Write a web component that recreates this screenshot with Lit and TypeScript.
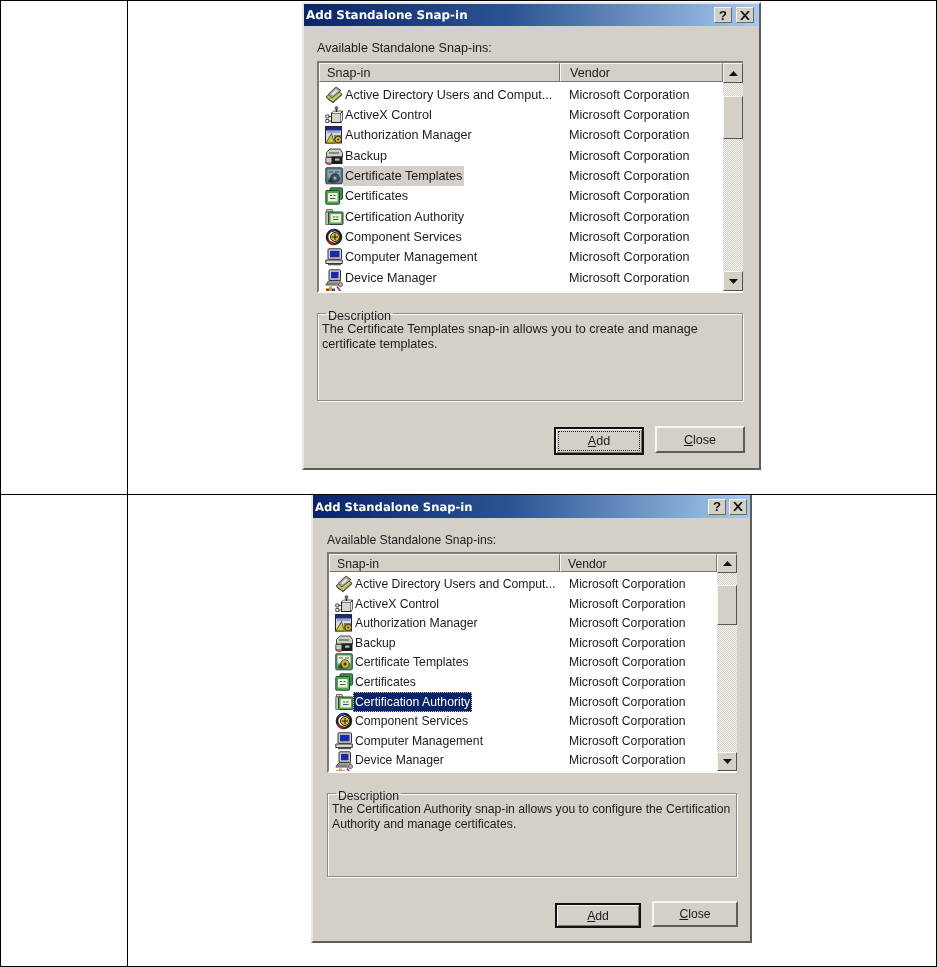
import { LitElement, html, css, svg } from "lit";
import { customElement, property } from "lit/decorators.js";

const icons: Record<string, unknown> = {
  ad: svg`<path d="M1 11 9.5 3 17 8 8 16.500z" fill="#c9c85a" stroke="#3a3a3a" stroke-width=".9"/><path d="M3 8.500 11 1l5 3.500-9 7.500z" fill="#a2a29a" stroke="#444" stroke-width=".9"/><path d="M6 8l5-4.500 2 1.500-5 4.500z" fill="#e6e6e0"/><path d="M2 12l6 4.500 9-8" fill="none" stroke="#555" stroke-width="1.100"/>`,
  ax: svg`<rect x="6.500" y="7" width="9.500" height="9.500" fill="#d8d6cc" stroke="#222" stroke-width="1"/><path d="M6.500 7l2-2h9l-1.500 2M16 7l1.500-2v9l-1.500 2.500" fill="#f2f1ec" stroke="#222" stroke-width=".7"/><path d="M11.500 6V2.500" stroke="#222" stroke-width="1.400"/><circle cx="11.500" cy="2" r="1.500" fill="#777" stroke="#222" stroke-width=".5"/><path d="M.8 9h3v3h-3zM.8 13.500h3v3h-3z" fill="#fff" stroke="#222" stroke-width=".8"/><path d="M3.800 10.500h2.700M3.800 15h2.700" stroke="#222" stroke-width=".8"/>`,
  az: svg`<rect x=".5" y=".5" width="16" height="16.500" fill="#d8d8e8" stroke="#223" stroke-width="1"/><rect x="1" y="1" width="15" height="3.500" fill="#1c2a80"/><rect x="2" y="5" width="13" height="2" fill="#9aa3d0"/><path d="M1 17 6.500 7.500 9.500 17z" fill="#d9c52a" stroke="#222" stroke-width=".7"/><path d="M9 9h7v8H9z" fill="#6d8f4a"/><circle cx="13.200" cy="13.500" r="3.300" fill="#e2b91e" stroke="#222" stroke-width=".9"/><circle cx="13.200" cy="13.500" r="1.100" fill="#222"/>`,
  bk: svg`<path d="M1.500 5.500 5 2h10l2.500 3.500V10h-16z" fill="#cfcfc8" stroke="#333" stroke-width=".9"/><path d="M4 6h10" stroke="#4d8a54" stroke-width="1.500"/><path d="M.8 10.500h10v5.500H.8z" fill="#c9c9c0" stroke="#333" stroke-width=".8"/><rect x="6.500" y="9.500" width="11" height="7.500" fill="#1d1d1d"/><rect x="10" y="11.500" width="4.500" height="2.200" fill="#bbb"/><path d="M.8 15.500c2 2.200 4 2.200 6 1" stroke="#b22" fill="none" stroke-width="1.200"/>`,
  ct1: svg`<rect x=".8" y=".8" width="16.500" height="16" rx="1" fill="#5b7b8b" stroke="#283c44" stroke-width="1"/><rect x="2.500" y="2.500" width="13" height="8" fill="#8aa5b2"/><path d="M4 5h4M10 5h4" stroke="#37505c" stroke-width="1"/><circle cx="10" cy="11" r="4.300" fill="#3f5054" stroke="#1f2a2e" stroke-width=".8"/><circle cx="10" cy="11" r="1.500" fill="#9fb4bc"/><path d="M2.500 15l3.500-5 2.500 6z" fill="#263338"/>`,
  ct2: svg`<rect x=".8" y=".8" width="16.500" height="16" rx="1" fill="#5da050" stroke="#244" stroke-width="1"/><rect x="2.500" y="2.500" width="13" height="8" fill="#e9f0d6"/><path d="M4 5h4M10 5h4" stroke="#567" stroke-width="1"/><circle cx="10" cy="11" r="4.300" fill="#c9b52c" stroke="#333" stroke-width=".8"/><circle cx="10" cy="11" r="1.500" fill="#333"/><path d="M2.500 15l3.500-5 2.500 6z" fill="#2d4f2c"/>`,
  ce: svg`<rect x="5" y=".8" width="12.500" height="11.500" rx="1" fill="#3e8a4f" stroke="#1f4a2c" stroke-width=".9"/><rect x=".8" y="3.500" width="13.700" height="13.700" rx="1" fill="#58a653" stroke="#1f4a2c" stroke-width="1"/><rect x="3" y="6" width="9.500" height="8.500" fill="#edf1d8"/><path d="M5 8.500h2M8.500 8.500h2M5 11.500h5.500" stroke="#456" stroke-width="1.100"/>`,
  ca: svg`<path d="M1.500 1.500h5.500l1 2.500H1.500z" fill="#ccc" stroke="#555" stroke-width=".8"/><rect x=".8" y="4" width="3.500" height="12.500" fill="#c4c4bc" stroke="#555" stroke-width=".8"/><rect x="3.500" y="4" width="14.500" height="12.500" rx="1" fill="#58a653" stroke="#1f4a2c" stroke-width="1"/><rect x="5.500" y="6" width="10.500" height="8.500" fill="#edf1d8"/><path d="M8 9h2.200M11.300 9h2.200M8 11.500h5.500" stroke="#456" stroke-width="1.100"/>`,
  cs: svg`<circle cx="9" cy="9" r="7" fill="#fff" stroke="#222" stroke-width="2.600"/><path d="M2 12.500a7.800 7.800 0 0 0 6.500 5v-3.500z" fill="#b02020"/><path d="M3.500 3.500a7.800 7.800 0 0 1 5.500-2.700V4z" fill="#2a3ca8"/><circle cx="10" cy="9" r="4.500" fill="#e0c020" stroke="#222" stroke-width="1"/><path d="M10 6v6M7 9h6" stroke="#222" stroke-width="1.100"/>`,
  cm: svg`<rect x="3" y=".8" width="13.500" height="10.500" rx="1" fill="#cfcfc8" stroke="#333" stroke-width="1"/><rect x="5" y="2.800" width="9.500" height="6.500" fill="#1c2ab0"/><path d="M.8 12h16.500v3.500H.8z" fill="#d8d8d0" stroke="#333" stroke-width="1"/><path d="M3 16.500h13" stroke="#555" stroke-width="1.500"/>`,
  dm: svg`<rect x="4" y=".8" width="11.500" height="10.500" rx="1" fill="#cfcfc8" stroke="#333" stroke-width="1"/><rect x="6" y="2.800" width="7.500" height="6.500" fill="#1c2ab0"/><path d="M4 11.500.8 16h12.700l2-4.500z" fill="#c8c8c0" stroke="#333" stroke-width=".9"/><path d="M3 13h10M2 14.700h10.500" stroke="#555" stroke-width=".8"/><circle cx="15.500" cy="15.500" r="2" fill="#bbb" stroke="#444" stroke-width=".8"/>`,
  xx: svg`<path d="M1 -.5h3v4H1z" fill="#b03020"/><path d="M4 -2.500h3v6H4z" fill="#d8a028"/><path d="M7 -.5h3v4H7z" fill="#3a4aa0"/><path d="M12 -2.500l4 5.500" stroke="#a03090" stroke-width="1.700"/>`,
};

const names: [string, string][] = [
  ["ad", "Active Directory Users and Comput..."],
  ["ax", "ActiveX Control"],
  ["az", "Authorization Manager"],
  ["bk", "Backup"],
  ["ct", "Certificate Templates"],
  ["ce", "Certificates"],
  ["ca", "Certification Authority"],
  ["cs", "Component Services"],
  ["cm", "Computer Management"],
  ["dm", "Device Manager"],
  ["xx", ""],
];

@customElement("snapin-dialog")
class SnapinDialog extends LitElement {
  @property({ reflect: true }) variant = "one";
  @property() selected = "";
  @property() line1 = "";
  @property() line2 = "";
  @property({ type: Boolean }) focused = false;

  static styles = css`
    :host {
      display: block;
      --bg: #d4d0c8;
      --ink: #1c1c1c;
      font-family: "Liberation Sans", Arial, sans-serif;
      color: var(--ink);
    }
    :host([variant="one"]) {
      --w: 459px; --h: 468px; --fs: 12.6px; --row: 20.35px; --top-b: 2px; --rows-top: 2.5px;
      --title-h: 22px; --label-h: 35px; --label-pb: 6px; --list-h: 232px; --head-h: 19px; --sb-h: 20px;
      --pad-l: 13px; --pad-r: 16px; --vcol: 241px; --vhead: 9px; --thumb-top: 13px; --thumb-h: 43px;
      --fs-gap: 18px; --fs-h: 90px; --btn-gap: 25px; --add-w: 90px; --add-h: 28px; --add-mt: 1px; --close-w: 90px; --close-h: 27px;
      --foot-mr: -2px; --tfs: 11.9px; --cap-gap: 4px; --cap-pr: 5px;
    }
    :host([variant="two"]) {
      --w: 441px; --h: 448px; --fs: 12.2px; --row: 19.6px; --top-b: 0px; --rows-top: 2px;
      --title-h: 23px; --label-h: 34px; --label-pb: 5px; --list-h: 221px; --head-h: 18px; --sb-h: 19px;
      --pad-l: 14px; --pad-r: 13px; --vcol: 231px; --vhead: 7px; --thumb-top: 12px; --thumb-h: 40px;
      --fs-gap: 17.5px; --fs-h: 86.5px; --btn-gap: 24px; --add-w: 86px; --add-h: 25px; --add-mt: 2px; --close-w: 86px; --close-h: 26px;
      --foot-mr: -1px; --tfs: 11.6px; --cap-gap: 3px; --cap-pr: 3px;
    }
    .dialog {
      box-sizing: border-box;
      width: var(--w);
      height: var(--h);
      margin: 0 auto;
      background: var(--bg);
      border: 2px solid;
      border-top-width: var(--top-b);
      border-color: #e8e6e0 #5f5d58 #5f5d58 #e8e6e0;
      display: flex;
      flex-direction: column;
      filter: blur(.35px);
    }
    .title {
      height: var(--title-h);
      flex: none;
      background: linear-gradient(90deg, #0a246a 0%, #2c5391 45%, #a6caf0 100%);
      display: flex;
      align-items: center;
      justify-content: space-between;
      padding: 0 var(--cap-pr) 0 2px;
      color: #fff;
      font: bold var(--tfs) "DejaVu Sans", sans-serif;
      text-rendering: geometricPrecision;
    }
    .caps { display: flex; gap: var(--cap-gap); }
    .cap {
      width: 18px; height: 16px; box-sizing: border-box;
      background: var(--bg);
      border: 1px solid; border-color: #f4f3ef #6b6963 #6b6963 #f4f3ef;
      display: flex; align-items: center; justify-content: center;
      color: #111; font: bold 13px "Liberation Sans", sans-serif;
    }
    .body {
      flex: 1;
      display: flex;
      flex-direction: column;
      padding: 0 var(--pad-r) 0 var(--pad-l);
      font-size: var(--fs);
    }
    .label { height: var(--label-h); flex: none; display: flex; align-items: flex-end; padding-bottom: var(--label-pb); box-sizing: border-box; }
    .list {
      height: var(--list-h);
      flex: none;
      box-sizing: border-box;
      border: solid;
      border-width: 2px 0 2px 2px;
      border-color: #7d7b75 #fbfaf7 #fbfaf7 #7d7b75;
      background: #fff;
      display: flex;
      overflow: hidden;
    }
    .main { flex: 1; min-width: 0; overflow: hidden; display: flex; flex-direction: column; }
    .head { height: var(--head-h); flex: none; display: grid; grid-template-columns: var(--vcol) 1fr; background: var(--bg); box-sizing: border-box; }
    .head div {
      display: flex; align-items: center; box-sizing: border-box;
      border: 1px solid; border-color: #f6f5f1 #77756f #77756f #f6f5f1;
      padding: 1px 0 0 7px;
    }
    .head div + div { padding-left: var(--vhead); }
    .rows { padding-top: var(--rows-top); }
    .row { height: var(--row); display: grid; grid-template-columns: var(--vcol) 1fr; align-items: stretch; white-space: nowrap; line-height: 14px; }
    .name { display: flex; align-items: center; padding-left: 6px; }
    .name svg { width: 18px; height: 18px; flex: none; overflow: visible; }
    .name span { padding: 3px 2px; }
    .vendor { padding-left: 9px; display: flex; align-items: center; }
    .sel-gray { background: var(--bg); }
    .sel-navy { background: #0a246a; color: #fff; outline: 1px dotted #d9c97e; outline-offset: -1px; }
    .bar { width: 20px; flex: none; display: flex; flex-direction: column; background: repeating-conic-gradient(#d4d0c8 0 25%, #f6f5f2 0 50%) 0 0 / 2px 2px; }
    .sb {
      height: var(--sb-h); flex: none; box-sizing: border-box; background: var(--bg);
      border: 1px solid; border-color: #f6f5f1 #55534e #55534e #f6f5f1;
      display: flex; align-items: center; justify-content: center;
    }
    .sb svg { width: 9px; height: 5px; }
    .track { flex: 1; padding-top: var(--thumb-top); }
    .thumb { height: var(--thumb-h); box-sizing: border-box; background: var(--bg); border: 1px solid; border-color: #f6f5f1 #55534e #55534e #f6f5f1; }
    fieldset {
      margin: calc(var(--fs-gap) - 6px) 0 0;
      height: calc(var(--fs-h) + 6px);
      box-sizing: border-box;
      flex: none;
      border: 1px solid #8d8b85;
      box-shadow: 1px 1px 0 #fbfaf7, inset 1px 1px 0 #fbfaf7;
      padding: 0 4px;
      min-width: 0;
    }
    legend { padding: 5px 2px 0; margin-left: 4px; line-height: 12px; }
    .desc { line-height: 15px; }
    .foot {
      margin: var(--btn-gap) var(--foot-mr) 0 0;
      display: flex;
      justify-content: flex-end;
      gap: 11px;
      align-items: flex-start;
    }
    .btn {
      box-sizing: border-box; display: flex; align-items: center; justify-content: center;
      background: var(--bg);
      border: 2px solid; border-color: #f6f5f1 #5d5b56 #5d5b56 #f6f5f1;
      width: var(--close-w); height: var(--close-h);
    }
    .btn u { text-underline-offset: 1px; }
    .default {
      width: var(--add-w); height: var(--add-h);
      margin-top: var(--add-mt);
      border-color: #111;
      box-shadow: inset 1px 1px 0 #f6f5f1, inset -1px -1px 0 #77756f;
    }
    .default span { display: flex; align-items: center; justify-content: center; flex: 1; align-self: stretch; box-sizing: border-box; margin: 2px; }
    .focused span { border: 1px dotted #222; }
  `;

  private icon(k: string) {
    const key = k === "ct" ? (this.variant === "one" ? "ct1" : "ct2") : k;
    return html`<svg viewBox="0 0 18 18">${icons[key]}</svg>`;
  }

  render() {
    return html`<div class="dialog">
      <div class="title">
        <span>Add Standalone Snap-in</span>
        <div class="caps">
          <div class="cap">?</div>
          <div class="cap"><svg width="10" height="9" viewBox="0 0 10 9"><path d="M1 0l8 9M9 0l-8 9" stroke="#111" stroke-width="1.8"/></svg></div>
        </div>
      </div>
      <div class="body">
        <div class="label">Available Standalone Snap-ins:</div>
        <div class="list">
          <div class="main">
            <div class="head"><div>Snap-in</div><div>Vendor</div></div>
            <div class="rows">
              ${names.map(([k, n]) => {
                const cls = n === this.selected ? (this.variant === "one" ? "sel-gray" : "sel-navy") : "";
                return html`<div class="row">
                  <div class="name">${this.icon(k)}${n ? html`<span class=${cls}>${n}</span>` : ""}</div>
                  ${n ? html`<div class="vendor">Microsoft Corporation</div>` : ""}
                </div>`;
              })}
            </div>
          </div>
          <div class="bar">
            <div class="sb"><svg viewBox="0 0 9 5"><path d="M4.500 0 9 5H0z" fill="#111"/></svg></div>
            <div class="track"><div class="thumb"></div></div>
            <div class="sb"><svg viewBox="0 0 9 5"><path d="M0 0h9L4.500 5z" fill="#111"/></svg></div>
          </div>
        </div>
        <fieldset>
          <legend>Description</legend>
          <div class="desc">${this.line1}<br />${this.line2}</div>
        </fieldset>
        <div class="foot">
          <div class="btn default ${this.focused ? "focused" : ""}"><span><u>A</u>dd</span></div>
          <div class="btn"><span><u>C</u>lose</span></div>
        </div>
      </div>
    </div>`;
  }
}

@customElement("app-root")
export class AppRoot extends LitElement {
  static styles = css`
    :host { display: block; background: #fff; }
    .table {
      width: 937px;
      height: 967px;
      box-sizing: border-box;
      display: grid;
      grid-template-columns: 127px 1fr;
      grid-template-rows: 494px 1fr;
      border: 1px solid #000;
    }
    .cell { box-sizing: border-box; }
    .left { border-right: 1px solid #000; }
    .top { border-bottom: 1px solid #000; }
    .wide { padding-right: 1px; }
    .c1 { padding-top: 1px; }
  `;
  render() {
    return html`<div class="table">
      <div class="cell left top"></div>
      <div class="cell wide top c1">
        <snapin-dialog
          variant="one"
          selected="Certificate Templates"
          focused
          line1="The Certificate Templates snap-in allows you to create and manage"
          line2="certificate templates."
        ></snapin-dialog>
      </div>
      <div class="cell left"></div>
      <div class="cell wide">
        <snapin-dialog
          variant="two"
          selected="Certification Authority"
          line1="The Certification Authority snap-in allows you to configure the Certification"
          line2="Authority and manage certificates."
        ></snapin-dialog>
      </div>
    </div>`;
  }
}
